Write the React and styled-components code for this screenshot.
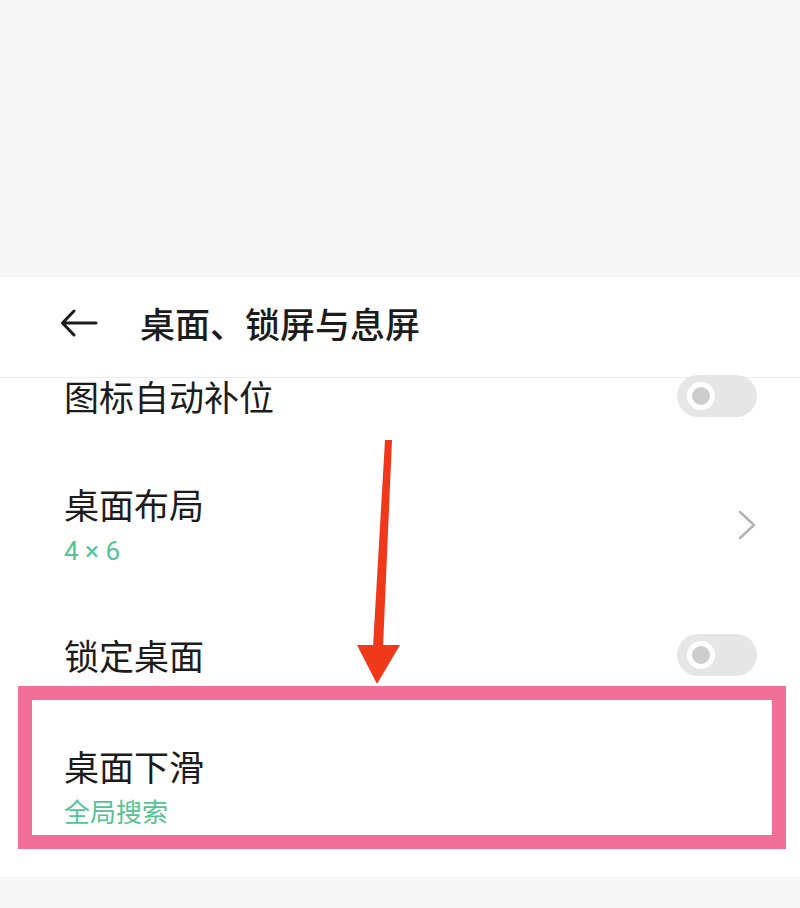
import React from "react";
import styled, { createGlobalStyle } from "styled-components";

const GlobalStyle = createGlobalStyle`
  html, body {
    margin: 0;
    padding: 0;
    background: #f7f7f7;
  }
  * {
    box-sizing: border-box;
  }
`;

const Page = styled.div`
  position: relative;
  width: 800px;
  min-height: 908px;
  background: #f7f7f7;
  font-family: "Noto Sans CJK SC", "Noto Sans", sans-serif;
  color: #1c1c1c;
  overflow: hidden;
`;

const TopSpace = styled.div`
  height: 277px;
`;

const Panel = styled.div`
  background: #ffffff;
  padding-bottom: 48px;
`;

const Header = styled.div`
  height: 101px;
  display: flex;
  align-items: center;
  padding: 0 0 8px 60px;
  border-bottom: 1px solid #ececec;
`;

const Title = styled.h1`
  margin: 0 0 0 42px;
  font-size: 35px;
  font-weight: 500;
  line-height: 40px;
`;

const Row = styled.div`
  display: flex;
  align-items: center;
  justify-content: space-between;
  padding: 0 43px 0 64px;
  margin-top: ${props => props.gap || 0}px;
  height: ${props => (props.h ? props.h + "px" : "auto")};
`;

const Texts = styled.div`
  display: flex;
  flex-direction: column;
  gap: 12px;
`;

const Label = styled.div`
  font-size: 35px;
  line-height: 40px;
`;

const Sub = styled.div`
  font-family: Roboto, "Noto Sans CJK SC", sans-serif;
  font-size: 26px;
  line-height: 30px;
  color: #55c393;
`;

const Track = styled.div`
  position: relative;
  width: 80px;
  height: 42px;
  border-radius: 21px;
  background: #e6e6e6;
`;

const Knob = styled.div`
  position: absolute;
  left: 10px;
  top: 7px;
  width: 28px;
  height: 28px;
  border-radius: 50%;
  border: 5px solid #ffffff;
  background: #cdcdcd;
`;

const Highlight = styled.div`
  position: absolute;
  left: 18px;
  top: 686px;
  width: 768px;
  height: 163px;
  border: 14px solid #f26f98;
  pointer-events: none;
`;

const ArrowLayer = styled.svg`
  position: absolute;
  left: 350px;
  top: 435px;
  pointer-events: none;
`;

const Toggle = () => (
  <Track>
    <Knob />
  </Track>
);

const BackIcon = () => (
  <svg width="38" height="28" viewBox="0 0 38 28">
    <path
      d="M36 14H3M14 2L2.5 14L14 26"
      fill="none"
      stroke="#1c1c1c"
      strokeWidth="3"
      strokeLinecap="round"
      strokeLinejoin="round"
    />
  </svg>
);

const Chevron = () => (
  <svg width="20" height="30" viewBox="0 0 20 30">
    <path
      d="M3 2L17 15L3 28"
      fill="none"
      stroke="#b3b3b3"
      strokeWidth="2.5"
      strokeLinecap="round"
      strokeLinejoin="round"
    />
  </svg>
);

export default function App() {
  return (
    <>
      <GlobalStyle />
      <Page>
        <TopSpace />
        <Panel>
          <Header>
            <BackIcon />
            <Title>桌面、锁屏与息屏</Title>
          </Header>
          <Row h={36}>
            <Label>图标自动补位</Label>
            <Toggle />
          </Row>
          <Row gap={70}>
            <Texts>
              <Label>桌面布局</Label>
              <Sub>4 × 6</Sub>
            </Texts>
            <Chevron />
          </Row>
          <Row gap={68}>
            <Label>锁定桌面</Label>
            <Toggle />
          </Row>
          <Row gap={70}>
            <Texts>
              <Label>桌面下滑</Label>
              <Sub>全局搜索</Sub>
            </Texts>
          </Row>
        </Panel>
        <Highlight />
        <ArrowLayer width="60" height="255" viewBox="0 0 60 255">
          <polygon points="35,5 42,5 33,212 23,212" fill="#f0381b" />
          <polygon points="7,210 50,210 27,249" fill="#f0381b" />
        </ArrowLayer>
      </Page>
    </>
  );
}
